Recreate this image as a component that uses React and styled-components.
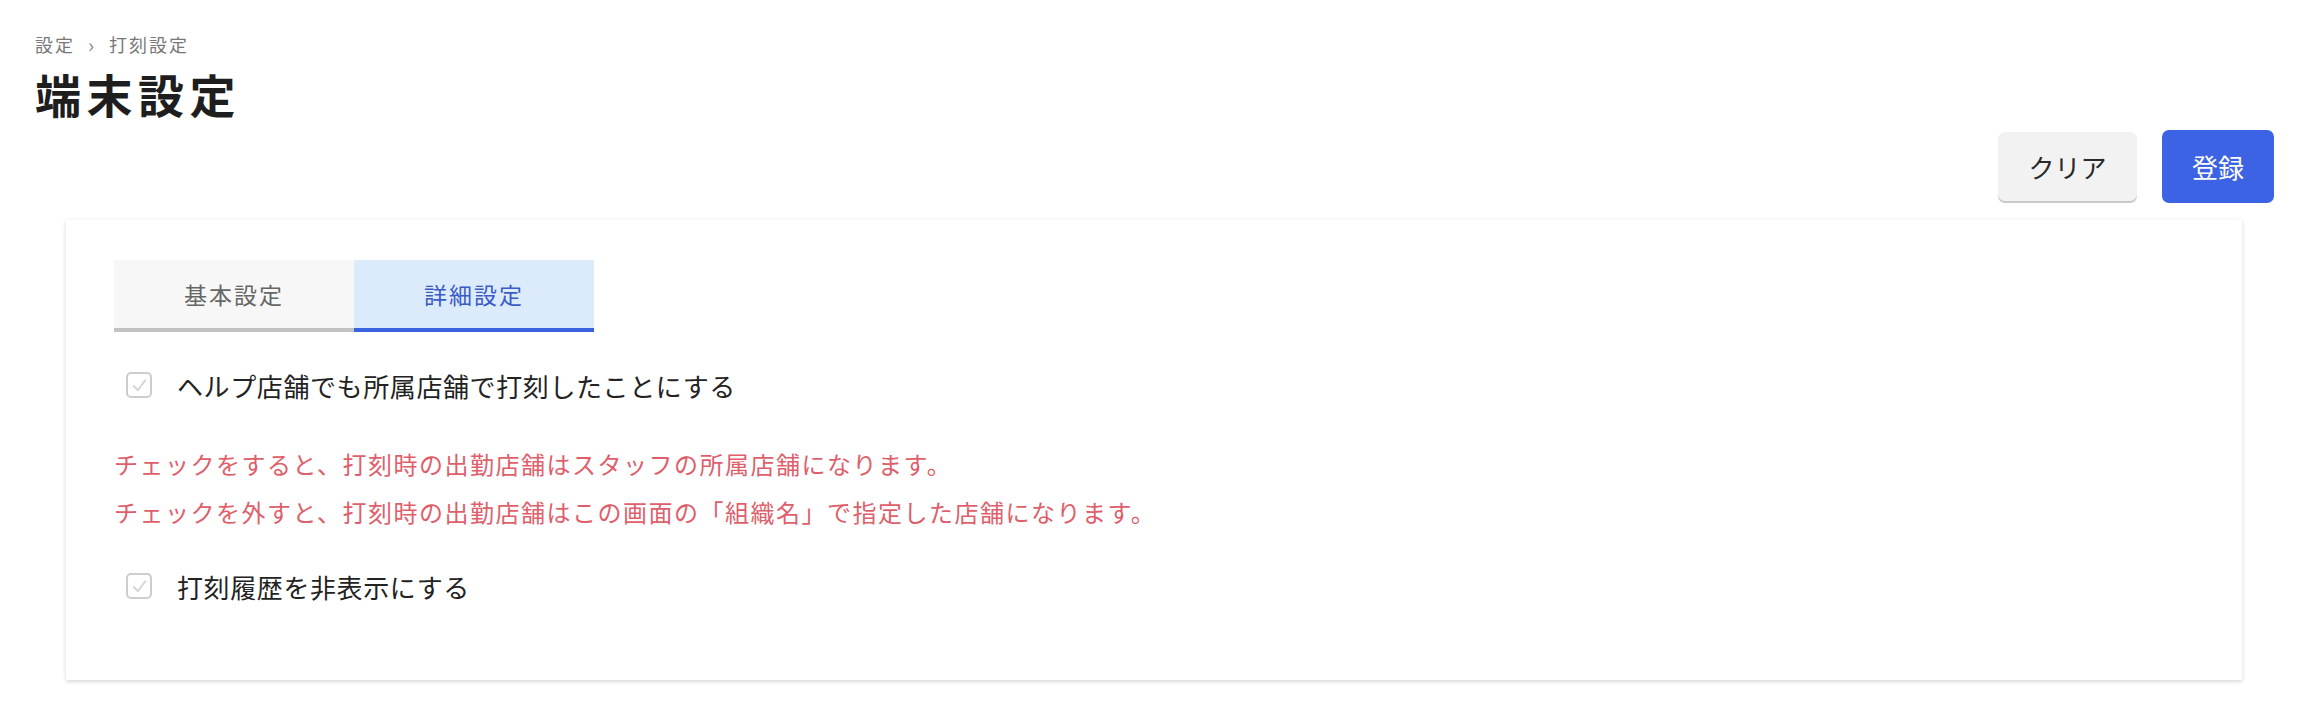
import React, { useState } from 'react';
import styled, { createGlobalStyle } from 'styled-components';

const GlobalStyle = createGlobalStyle`
  html, body {
    margin: 0;
    padding: 0;
    background: #fff;
  }
  body {
    font-family: "Noto Sans CJK JP", "Noto Sans", sans-serif;
    color: #222;
    -webkit-font-smoothing: antialiased;
  }
`;

const Page = styled.div`
  min-height: 712px;
  box-sizing: border-box;
  padding: 31px 42px 32px 35px;
`;

const Breadcrumb = styled.div`
  display: flex;
  align-items: center;
  gap: 13px;
  font-size: 18px;
  line-height: 27px;
  letter-spacing: 2px;
  color: #777;
`;

const Chevron = styled.span`
  font-size: 20px;
  color: #888;
`;

const Title = styled.h1`
  margin: 8px 0 0;
  font-size: 46px;
  line-height: 55px;
  font-weight: 700;
  letter-spacing: 5.5px;
  color: #1e1e1e;
`;

const Actions = styled.div`
  display: flex;
  justify-content: flex-end;
  align-items: center;
  gap: 25px;
  margin-top: 9px;
`;

const Button = styled.button`
  display: flex;
  align-items: center;
  justify-content: center;
  border: none;
  border-radius: 7px;
  font-family: inherit;
  font-size: 26px;
  cursor: pointer;
  width: ${p => (p.$primary ? '112px' : '139px')};
  height: ${p => (p.$primary ? '73px' : '69px')};
  background: ${p => (p.$primary ? '#3b63e3' : '#f2f2f2')};
  color: ${p => (p.$primary ? '#fff' : '#2a2a2a')};
  box-shadow: ${p => (p.$primary ? 'none' : '0 2px 0 #c9c9c9')};
`;

const Card = styled.section`
  margin: 17px 32px 0 31px;
  padding: 40px 48px 74px;
  background: #fff;
  box-shadow: 0 2px 4px rgba(0, 0, 0, 0.12), 0 0 6px rgba(0, 0, 0, 0.06);
`;

const Tabs = styled.div`
  display: flex;
`;

const Tab = styled.div`
  width: 240px;
  height: 68px;
  display: flex;
  align-items: center;
  justify-content: center;
  font-size: 23px;
  letter-spacing: 2px;
  cursor: pointer;
  background: ${p => (p.$active ? '#dcebfb' : '#f7f7f7')};
  color: ${p => (p.$active ? '#3a5bc7' : '#666')};
  border-bottom: 4px solid ${p => (p.$active ? '#3a63e2' : '#c2c2c2')};
`;

const CheckRow = styled.label`
  display: flex;
  align-items: center;
  gap: 25px;
  height: 40px;
  margin: ${p => p.$m};
  padding-left: 12px;
  font-size: 26px;
  letter-spacing: 0.6px;
  color: #222;
  cursor: pointer;
`;

const Box = styled.span`
  flex: none;
  width: 26px;
  height: 26px;
  box-sizing: border-box;
  border: 2px solid #cdcdcd;
  border-radius: 5px;
  display: flex;
  align-items: center;
  justify-content: center;
  background: #fff;
`;

const Notes = styled.div`
  margin-top: 35px;
  font-size: 24px;
  line-height: 48px;
  letter-spacing: 1.5px;
  color: #de5f6b;
`;

const Check = ({ checked, onToggle, children, m }) => (
  <CheckRow $m={m} onClick={onToggle}>
    <Box>
      <svg width="17" height="17" viewBox="0 0 16 16">
        <polyline
          points="2.5,8.5 6.5,12.5 13.5,3"
          fill="none"
          stroke={checked ? '#3b63e3' : '#d6d6d6'}
          strokeWidth="1.8"
          strokeLinecap="round"
          strokeLinejoin="round"
        />
      </svg>
    </Box>
    {children}
  </CheckRow>
);

export default function App() {
  const [tab, setTab] = useState(1);
  const [help, setHelp] = useState(false);
  const [hide, setHide] = useState(false);

  return (
    <Page>
      <GlobalStyle />
      <Breadcrumb>
        <span>設定</span>
        <Chevron>›</Chevron>
        <span>打刻設定</span>
      </Breadcrumb>
      <Title>端末設定</Title>
      <Actions>
        <Button>クリア</Button>
        <Button $primary>登録</Button>
      </Actions>
      <Card>
        <Tabs>
          <Tab $active={tab === 0} onClick={() => setTab(0)}>基本設定</Tab>
          <Tab $active={tab === 1} onClick={() => setTab(1)}>詳細設定</Tab>
        </Tabs>
        <Check m="33px 0 0" checked={help} onToggle={() => setHelp(!help)}>
          ヘルプ店舗でも所属店舗で打刻したことにする
        </Check>
        <Notes>
          <div>チェックをすると、打刻時の出勤店舗はスタッフの所属店舗になります。</div>
          <div>チェックを外すと、打刻時の出勤店舗はこの画面の「組織名」で指定した店舗になります。</div>
        </Notes>
        <Check m="30px 0 0" checked={hide} onToggle={() => setHide(!hide)}>
          打刻履歴を非表示にする
        </Check>
      </Card>
    </Page>
  );
}
